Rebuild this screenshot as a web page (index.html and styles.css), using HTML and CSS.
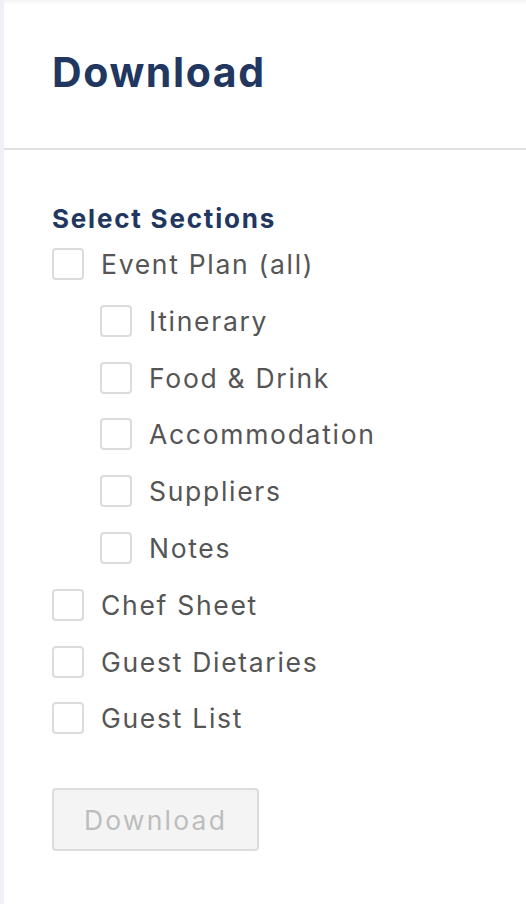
FILE: index.html
```html
<!DOCTYPE html>
<html lang="en">
<head>
<meta charset="utf-8">
<title>Download</title>
<link rel="stylesheet" href="styles.css">
</head>
<body>
<div class="panel">
  <header class="panel-header">
    <h1 class="title">Download</h1>
  </header>
  <section class="panel-body">
    <h2 class="section-title">Select Sections</h2>
    <ul class="options">
      <li class="option"><input type="checkbox" class="box"><span class="label">Event Plan (all)</span></li>
      <li class="option sub"><input type="checkbox" class="box"><span class="label">Itinerary</span></li>
      <li class="option sub"><input type="checkbox" class="box"><span class="label">Food &amp; Drink</span></li>
      <li class="option sub"><input type="checkbox" class="box"><span class="label">Accommodation</span></li>
      <li class="option sub"><input type="checkbox" class="box"><span class="label">Suppliers</span></li>
      <li class="option sub"><input type="checkbox" class="box"><span class="label">Notes</span></li>
      <li class="option"><input type="checkbox" class="box"><span class="label">Chef Sheet</span></li>
      <li class="option"><input type="checkbox" class="box"><span class="label">Guest Dietaries</span></li>
      <li class="option"><input type="checkbox" class="box"><span class="label">Guest List</span></li>
    </ul>
    <button class="btn" disabled>Download</button>
  </section>
</div>
</body>
</html>
```

FILE: styles.css
```css
html, body {
  margin: 0;
  padding: 0;
}
body {
  background: #eff1f5;
  font-family: Inter, "Open Sans", "Liberation Sans", sans-serif;
}
.panel {
  margin-left: 4px;
  min-height: 904px;
  background: linear-gradient(#f4f4f4, #ffffff 5px);
}
.panel-header {
  padding: 47px 52px 51px 48px;
  border-bottom: 2px solid #e2e2e2;
}
.title {
  margin: 0;
  font-size: 41px;
  line-height: 50px;
  font-weight: 700;
  color: #22375f;
  letter-spacing: 1.6px;
}
.panel-body {
  padding: 53px 48px 0 48px;
}
.section-title {
  margin: 0;
  font-size: 26px;
  line-height: 32px;
  font-weight: 700;
  color: #22375f;
  letter-spacing: 1.8px;
}
.options {
  list-style: none;
  margin: 13px 0 0 0;
  padding: 0;
  display: flex;
  flex-direction: column;
  gap: 24.8px;
}
.option {
  display: flex;
  align-items: center;
  height: 32px;
}
.option.sub {
  margin-left: 48px;
}
.box {
  -webkit-appearance: none;
  appearance: none;
  margin: 0 17px 0 0;
  width: 32px;
  height: 32px;
  border: 2px solid #dcdcdc;
  border-radius: 4px;
  background: #fff;
  box-sizing: border-box;
  flex: none;
}
.label {
  font-size: 26.5px;
  line-height: 32px;
  color: #555555;
  letter-spacing: 1.7px;
}
.btn {
  margin-top: 54px;
  width: 207px;
  height: 63px;
  box-sizing: border-box;
  border: 2px solid #dcdcdc;
  border-radius: 4px;
  background: #f4f4f4;
  color: #bdbdbd;
  font-family: Inter, "Open Sans", "Liberation Sans", sans-serif;
  font-size: 26.5px;
  letter-spacing: 2.2px;
  padding: 0;
}
```
